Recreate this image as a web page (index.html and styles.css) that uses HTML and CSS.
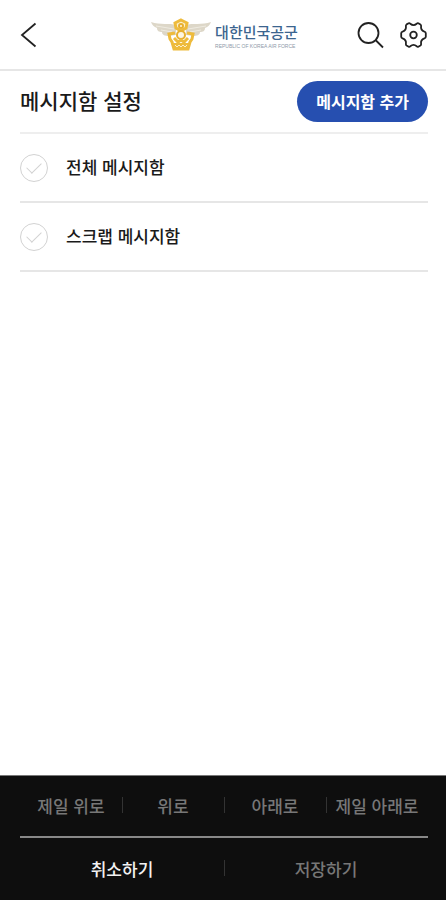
FILE: index.html
```html
<!DOCTYPE html>
<html lang="ko">

<head>
    <meta charset="UTF-8">
    <meta name="viewport" content="width=device-width, initial-scale=1.0">
    <title>메시지함 설정</title>
    <link rel="stylesheet" href="styles.css">
</head>

<body>
    <!-- 상단 헤더 -->
    <header class="header">
        <a class="back" href="#" aria-label="뒤로">
            <svg width="18" height="26" viewBox="0 0 18 26">
                <path d="M15.5 1.5 L2 13 L15.5 24.5" />
            </svg>
        </a>

        <a class="logo" href="#">
            <svg class="emblem" width="62" height="34" viewBox="0 0 62 34" aria-hidden="true">
                <path class="wing" d="M26 7 C20 5 10 7 1 4 C2 7 4 9 7 10 C7 13 9 14 12 14 C12 17 15 18 19 18 L26 17 Z" />
                <path class="wing" d="M36 7 C42 5 52 7 61 4 C60 7 58 9 55 10 C55 13 53 14 50 14 C50 17 47 18 43 18 L36 17 Z" />
                <path class="feather" d="M6 8 L24 11 M11 12 L22 14 M56 8 L38 11 M51 12 L40 14" />
                <path class="frame" d="M25 15 L19 16 L20 21 L22 24 L24 31 H38 L40 24 L42 21 L43 16 L37 15" />
                <path class="frame top" d="M31 2 L37 5 L36 10 L31 13 L26 10 L25 5 Z" />
                <circle class="ring" cx="31" cy="8" r="2" />
                <circle class="ring" cx="31" cy="17" r="4" />
                <path class="frame" d="M24 20 L28 24 L31 22 L34 24 L38 20" />
                <path class="gold" d="M23 25 H39 L38 31 H24 Z" />
                <path class="slit" d="M25 27 L27 29 L29 27 L31 29 L33 27 L35 29 L37 27" />
            </svg>
            <span class="logo-text">
                <strong>대한민국공군</strong>
                <small>REPUBLIC OF KOREA AIR FORCE</small>
            </span>
        </a>

        <div class="tools">
            <button type="button" class="icon-btn" aria-label="검색">
                <svg width="28" height="28" viewBox="0 0 28 28">
                    <circle cx="11.5" cy="12" r="10" />
                    <path d="M18.5 19 L26 26.5" />
                </svg>
            </button>
            <button type="button" class="icon-btn" aria-label="설정">
                <svg width="28" height="28" viewBox="0 0 28 28">
                    <path d="M6.6 3.4 L8.6 2.3 Q9.6 1.9 10.3 2.8 Q13.5 5.4 16.7 2.8 Q17.4 1.9 18.4 2.3 L20.4 3.4 Q21.3 4 21.1 5.2 Q20.4 9.2 24.4 10.6 Q25.8 11 25.8 12.2 V15.8 Q25.8 17 24.4 17.4 Q20.4 18.8 21.1 22.8 Q21.3 24 20.4 24.6 L18.4 25.7 Q17.4 26.1 16.7 25.2 Q13.5 22.6 10.3 25.2 Q9.6 26.1 8.6 25.7 L6.6 24.6 Q5.7 24 5.9 22.8 Q6.6 18.8 2.6 17.4 Q1.2 17 1.2 15.8 V12.2 Q1.2 11 2.6 10.6 Q6.6 9.2 5.9 5.2 Q5.7 4 6.6 3.4 Z" />
                    <circle cx="13.5" cy="14" r="3.3" />
                </svg>
            </button>
        </div>
    </header>

    <!-- 메시지함 목록 -->
    <main class="content">
        <div class="title-row">
            <h1>메시지함 설정</h1>
            <button type="button" class="add-btn">메시지함 추가</button>
        </div>
        <ul class="box-list">
            <li>
                <input type="checkbox" id="boxAll">
                <label for="boxAll">전체 메시지함</label>
            </li>
            <li>
                <input type="checkbox" id="boxScrap">
                <label for="boxScrap">스크랩 메시지함</label>
            </li>
        </ul>
    </main>

    <!-- 하단 버튼 -->
    <footer class="footer">
        <div class="btn-row move">
            <button type="button">제일 위로</button>
            <button type="button">위로</button>
            <button type="button">아래로</button>
            <button type="button">제일 아래로</button>
        </div>
        <div class="btn-row">
            <button type="button" class="cancel">취소하기</button>
            <button type="button">저장하기</button>
        </div>
    </footer>
</body>

</html>
```

FILE: styles.css
```css
* {
    box-sizing: border-box;
}

body {
    display: flex;
    flex-direction: column;
    min-height: 100vh;
    margin: 0;
    font-family: "Noto Sans CJK KR", sans-serif;
    font-weight: 500;
    color: #1a1a1a;
    background-color: #fff;
}

button {
    padding: 0;
    border: none;
    background: none;
    font: inherit;
    white-space: nowrap;
    cursor: pointer;
}

/* 상단 헤더 */
.header {
    display: grid;
    grid-template-columns: 1fr auto 1fr;
    align-items: center;
    height: 71px;
    padding: 0 18px 0 20px;
    border-bottom: 2px solid #e6e6e6;
}

.header svg {
    display: block;
}

.back svg,
.icon-btn svg {
    fill: none;
    stroke: #222;
    stroke-width: 1.8;
}

.tools {
    display: flex;
    justify-content: flex-end;
    gap: 15px;
}

.logo {
    display: flex;
    align-items: center;
    gap: 3px;
    text-decoration: none;
}

.logo-text {
    display: flex;
    flex-direction: column;
    color: #3c658f;
}

.logo-text strong {
    font-size: 15px;
    font-weight: 500;
    line-height: 22px;
}

.logo-text small {
    font-family: "Liberation Sans", sans-serif;
    font-size: 5px;
    font-weight: 400;
    line-height: 6px;
    color: #8d99a8;
    white-space: nowrap;
}

.wing {
    fill: #ddd7c8;
}

.feather {
    fill: none;
    stroke: #efebe1;
    stroke-width: 1;
}

.gold {
    fill: #eebb3c;
}

.frame {
    fill: none;
    stroke: #eebb3c;
    stroke-width: 3;
}

.frame.top {
    fill: #fbf0d0;
}

.ring {
    fill: #fdf6e3;
    stroke: #e8b02f;
    stroke-width: 2;
}

.slit {
    fill: none;
    stroke: #fbeec8;
    stroke-width: 1;
}

/* 본문 */
.content {
    flex: 1;
    padding: 0 18px 0 20px;
}

.title-row {
    display: flex;
    justify-content: space-between;
    align-items: center;
    height: 63px;
    border-bottom: 2px solid #eee;
}

h1 {
    margin: 0;
    padding-bottom: 3px;
    font-size: 21px;
    font-weight: 500;
}

.add-btn {
    height: 41px;
    padding: 0 19px 2px;
    border-radius: 21px;
    font-size: 16px;
    font-weight: 700;
    color: #fff;
    background-color: #264fb0;
}

.box-list {
    margin: 0;
    padding: 0;
    list-style: none;
}

.box-list li {
    display: flex;
    align-items: center;
    gap: 18px;
    height: 69px;
    border-bottom: 2px solid #e6e6e6;
    font-size: 17px;
}

.box-list label {
    padding-bottom: 2px;
}

/* 원형 체크박스 */
.box-list input {
    appearance: none;
    display: grid;
    place-items: center;
    width: 28px;
    height: 28px;
    margin: 0;
    border: 1px solid #d2d2d2;
    border-radius: 50%;
}

.box-list input::before {
    content: "";
    width: 13px;
    height: 7px;
    margin-bottom: 4px;
    border: solid #d2d2d2;
    border-width: 0 0 1px 1px;
    transform: rotate(-45deg);
}

.box-list input:checked,
.box-list input:checked::before {
    border-color: #264fb0;
}

/* 하단 버튼 */
.footer {
    padding: 0 18px 0 20px;
    border-top: 1px solid #777;
    background-color: #0e0e0e;
}

.btn-row {
    display: grid;
    grid-auto-columns: 1fr;
    grid-auto-flow: column;
    height: 62px;
    font-size: 17px;
}

.btn-row.move {
    border-bottom: 2px solid #888;
}

.btn-row button {
    display: flex;
    align-items: center;
    justify-content: center;
    padding-bottom: 2px;
    color: #777;
}

/* 버튼 사이 구분선 */
.btn-row button + button::before {
    content: "";
    width: 1px;
    height: 16px;
    margin-right: auto;
    background-color: #333;
}

.btn-row button + button::after {
    content: "";
    width: 1px;
    margin-left: auto;
}

.btn-row .cancel {
    color: #f2f2f2;
}
```
